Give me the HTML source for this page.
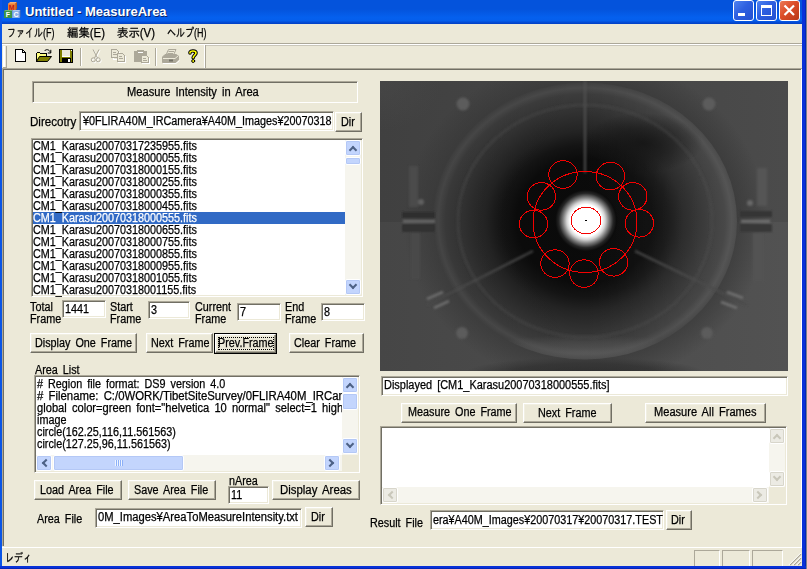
<!DOCTYPE html>
<html><head><meta charset="utf-8"><title>Untitled - MeasureArea</title>
<style>
html,body{margin:0;padding:0}
body{width:807px;height:569px;overflow:hidden;background:#ECE9D8;position:relative;font-family:"Liberation Sans","IPAGothic","Noto Sans CJK JP",sans-serif;font-size:12px;color:#000;line-height:12px}
.a{position:absolute}
.t{position:absolute;white-space:pre;transform:scaleX(.9);transform-origin:0 0;word-spacing:2.2px;line-height:12px;height:12px;-webkit-text-stroke:.25px}
.btn{position:absolute;box-sizing:border-box;background:#ECE9D8;border:1px solid;border-color:#fff #716F64 #716F64 #fff;box-shadow:inset -1px -1px 0 #ACA899,inset 1px 1px 0 #F1EFE2}
.edit{position:absolute;box-sizing:border-box;background:#fff;border:1px solid;border-color:#ACA899 #fff #fff #ACA899;box-shadow:inset 1px 1px 0 #716F64,inset -1px -1px 0 #ECE9D8;overflow:hidden}
.sunk{position:absolute;box-sizing:border-box;border:1px solid;border-color:#ACA899 #fff #fff #ACA899;box-shadow:inset 1px 1px 0 #716F64,inset -1px -1px 0 #ECE9D8}
.sbtn{position:absolute;box-sizing:border-box;background:#C3D5FD;border:1px solid #fff;border-radius:2px;box-shadow:inset 0 0 0 1px #B4C8F6}
.sbtn.dis{background:#ECEBE4;border-color:#fff;box-shadow:inset 0 0 0 1px #D8D6CB}
.sbtn::after{content:"";position:absolute;left:50%;top:50%;width:4px;height:4px;border:solid #4D6185;border-width:2px 0 0 2px;margin:-3px 0 0 -3px;display:none}
.up::after{display:block;transform:translateY(2px) rotate(45deg)}
.dn::after{display:block;transform:translateY(-2px) rotate(225deg)}
.lf::after{display:block;transform:translateX(2px) rotate(-45deg)}
.rt::after{display:block;transform:translateX(-2px) rotate(135deg)}
.sbtn.dis::after{border-color:#C9C7BA}
.track{position:absolute;background:#F6F5EE}
</style></head><body>
<!-- TITLEBAR -->
<div class="a" id="title" style="left:0;top:0;width:807px;height:24px;background:linear-gradient(#0453DC 0,#0453DC 38%,#0560EE 72%,#055EEC 86%,#0347D0 95%,#0240C4 100%)"></div>
<div class="a" style="left:25px;top:3px;font:bold 13px 'Liberation Sans',sans-serif;color:#fff;white-space:pre;line-height:18px;text-shadow:1px 1px 0 #0A246A" id="ttext">Untitled - MeasureArea</div>
<svg class="a" style="left:3px;top:1px" width="19" height="18" viewBox="3 1 19 18">
<path d="M8 4L10 2H17L15 4Z" fill="#F8B070"/><path d="M15 4L17 2V9L15 10.500Z" fill="#B85818"/><rect x="8" y="3.500" width="7.500" height="7" fill="#EC8038"/>
<path d="M4 11L5.500 10H12L12 11Z" fill="#80C080"/><rect x="4" y="10.800" width="8" height="7.200" fill="#3C9444"/>
<path d="M12 11L13.500 10H20.500L19.500 11Z" fill="#B8D0F0"/><path d="M19.500 11L20.500 10V17L19.500 18Z" fill="#5070B0"/><rect x="12.200" y="10.800" width="7.500" height="7.200" fill="#88B0E8"/>
<text x="11.700" y="9.800" font-family="Liberation Sans,sans-serif" font-weight="bold" font-size="7" fill="#C01810" text-anchor="middle">M</text>
<text x="8" y="17.200" font-family="Liberation Sans,sans-serif" font-weight="bold" font-size="7" fill="#fff" text-anchor="middle">F</text>
<text x="16" y="17.200" font-family="Liberation Sans,sans-serif" font-weight="bold" font-size="7" fill="#fff" text-anchor="middle">C</text>
</svg>
<div class="a" style="left:733px;top:0;width:21px;height:21px;box-sizing:border-box;border:1px solid #fff;border-radius:3px;background:linear-gradient(135deg,#4F83F0 0,#2E5FE0 45%,#2450D0 100%)"></div>
<div class="a" style="left:738px;top:13px;width:7px;height:3px;background:#fff"></div>
<div class="a" style="left:756px;top:0;width:21px;height:21px;box-sizing:border-box;border:1px solid #fff;border-radius:3px;background:linear-gradient(135deg,#4F83F0 0,#2E5FE0 45%,#2450D0 100%)"></div>
<div class="a" style="left:761px;top:5px;width:11px;height:11px;box-sizing:border-box;border:1px solid #fff;border-top-width:3px"></div>
<div class="a" style="left:779px;top:0;width:21px;height:21px;box-sizing:border-box;border:1px solid #fff;border-radius:3px;background:linear-gradient(135deg,#EC7A58 0,#DC4C28 45%,#B83818 100%)"></div>
<svg class="a" style="left:779px;top:0" width="21" height="21" viewBox="0 0 21 21"><path d="M5.500 5.500L15 15M15 5.500L5.500 15" stroke="#fff" stroke-width="2.200" fill="none"/></svg>
<!-- MENU -->
<div class="a" style="left:2px;top:24px;width:800px;height:19px;background:#ECE9D8"></div>
<div class="t" style="left:7px;top:27px;transform:scaleX(.75)">ファイル(F)</div>
<div class="t" style="left:67px;top:27px;transform:scaleX(.95)">編集(E)</div>
<div class="t" style="left:117px;top:27px;transform:scaleX(.95)">表示(V)</div>
<div class="t" style="left:167px;top:27px;transform:scaleX(.75)">ヘルプ(H)</div>
<div class="a" style="left:2px;top:43px;width:800px;height:1px;background:#ACA899"></div>
<div class="a" style="left:2px;top:44px;width:800px;height:1px;background:#fff"></div>

<!-- TOOLBAR -->
<div class="a" style="left:3px;top:46px;width:2px;height:21px;background:#fff"></div>
<div class="a" style="left:6px;top:46px;width:1px;height:22px;background:#ACA899"></div>
<div class="a" style="left:3px;top:67px;width:4px;height:1px;background:#ACA899"></div>
<div class="a" style="left:206px;top:45px;width:596px;height:1px;background:#C9C6B9"></div>
<div class="a" style="left:204px;top:45px;width:1px;height:23px;background:#fff"></div>
<div class="a" style="left:205px;top:45px;width:1px;height:23px;background:#ACA899"></div>
<div class="a" style="left:80px;top:48px;width:1px;height:18px;background:#ACA899"></div>
<div class="a" style="left:81px;top:48px;width:1px;height:18px;background:#fff"></div>
<div class="a" style="left:155px;top:48px;width:1px;height:18px;background:#ACA899"></div>
<div class="a" style="left:156px;top:48px;width:1px;height:18px;background:#fff"></div>
<svg class="a" style="left:0;top:45px" width="220" height="23" viewBox="0 0 220 23"><g id="tbicons" transform="translate(0,-45)" shape-rendering="crispEdges">
<!-- new -->
<path d="M15.5 49.5H22.5L25.5 52.5V61.5H15.5Z" fill="#fff" stroke="#000"/><path d="M22.5 49.5V52.5H25.5" fill="none" stroke="#000"/>
<!-- open -->
<path d="M36.5 61.5V53.5L37.5 52.5H39.5L40.5 53.5H46.5V56.5" fill="#FFFF80" stroke="#000"/>
<path d="M36.5 61.5L39.5 56.5H51.5L47.5 61.5Z" fill="#808000" stroke="#000" shape-rendering="auto"/>
<path d="M44.5 51C46 49 49 49 50.5 52.5M50.8 49.8V53H47.8" fill="none" stroke="#000" shape-rendering="auto"/>
<!-- save -->
<rect x="59.5" y="49.5" width="13" height="13" fill="#808000" stroke="#000"/>
<rect x="62" y="50" width="8" height="6" fill="#ECE9D8"/><rect x="62" y="56" width="8" height="1" fill="#fff"/>
<rect x="62" y="58" width="9" height="4" fill="#000"/><rect x="68" y="59" width="2" height="3" fill="#fff"/><rect x="71" y="50" width="1" height="1" fill="#fff"/>
<!-- cut (disabled) -->
<g fill="none" shape-rendering="auto">
<g stroke="#fff" transform="translate(1,1)"><path d="M93 49.5L97.5 58M99 49.5L94.5 58"/><circle cx="93.3" cy="59.8" r="2"/><circle cx="98.2" cy="59.8" r="2"/></g>
<g stroke="#ACA899"><path d="M93 49.5L97.5 58M99 49.5L94.5 58"/><circle cx="93.3" cy="59.8" r="2"/><circle cx="98.2" cy="59.8" r="2"/></g>
</g>
<!-- copy (disabled) -->
<g fill="#ECE9D8">
<path d="M112.500 50.5H117.500L119.500 52.500V58.500H112.500Z" stroke="#fff" transform="translate(1,1)"/>
<path d="M111.500 49.500H116.500L118.500 51.500V57.500H111.500Z" stroke="#ACA899"/>
<path d="M113 52.500H116M113 54.500H117" stroke="#ACA899"/>
<path d="M117.500 53.500H122.500L124.500 55.500V61.500H117.500Z" stroke="#fff" transform="translate(1,1)"/>
<path d="M117.500 53.500H122.500L124.500 55.500V61.500H117.500Z" stroke="#ACA899"/>
<path d="M119 56.500H122M119 58.500H123M119 60" stroke="#ACA899"/>
</g>
<!-- paste (disabled) -->
<rect x="134" y="51" width="13" height="11" fill="#ACA899"/><rect x="137" y="49.500" width="7" height="3" fill="#ACA899"/><rect x="138" y="52" width="5" height="1" fill="#fff"/>
<path d="M141.500 55.500H146.500L148.500 57.500V62.500H141.500Z" fill="#ECE9D8" stroke="#fff" transform="translate(1,1)"/>
<path d="M141.500 55.500H146.500L148.500 57.500V62.500H141.500Z" fill="#ECE9D8" stroke="#ACA899"/><path d="M143 58.500H146M143 60.500H147" stroke="#ACA899"/>
<!-- print (disabled) -->
<g shape-rendering="auto">
<path d="M166 55L168.500 49.500H176L173.500 55Z" fill="#ECE9D8" stroke="#ACA899"/>
<path d="M168.500 51.500H174M167.500 53.500H173" stroke="#ACA899" fill="none"/>
<path d="M162.500 57L165 54.500H176L178.500 56V60L175.500 62.500H162.500Z" fill="#ACA899" stroke="#ACA899"/>
<path d="M163 58.500H175M175 58.500L178 56" stroke="#ECE9D8" fill="none"/>
<rect x="169" y="59.500" width="4" height="2" fill="#716F64"/>
<path d="M163 63.500H176L179.500 60.500" stroke="#fff" fill="none"/>
</g>
<!-- help -->
<g shape-rendering="auto" fill="none" stroke-linecap="round" stroke-linejoin="round">
<path d="M190 53V52.500C190 50.500 196 50.500 196 53C196 55 193.200 55.500 193.200 57.800" stroke="#000" stroke-width="3.600"/>
<path d="M190 53V52.500C190 50.500 196 50.500 196 53C196 55 193.200 55.500 193.200 57.800" stroke="#FFFF00" stroke-width="1.600"/>
<circle cx="193.200" cy="61" r="1.500" fill="#FFFF00" stroke="#000" stroke-width="1"/>
</g>
</g></svg>

<!-- VIEW -->
<div class="a" style="left:2px;top:68px;width:800px;height:1px;background:#ACA899"></div>
<div class="a" style="left:2px;top:69px;width:800px;height:1px;background:#716F64"></div>
<div class="a" style="left:2px;top:68px;width:1px;height:478px;background:#ACA899"></div>
<div class="a" style="left:3px;top:69px;width:1px;height:477px;background:#716F64"></div>
<div class="a" style="left:801px;top:69px;width:1px;height:478px;background:#fff"></div>

<!-- LEFT -->
<div class="sunk" style="left:32px;top:81px;width:326px;height:22px"></div>
<div class="t" style="left:127px;top:86px;transform:scaleX(.928)">Measure Intensity in Area</div>
<div class="t" style="left:30px;top:116px;transform:scaleX(.965)">Direcotry</div>
<div class="edit" style="left:79px;top:111px;width:255px;height:20px"></div>
<div class="t" style="left:83px;top:115px">¥0FLIRA40M_IRCamera¥A40M_Images¥20070318</div>
<div class="btn" style="left:335px;top:112px;width:27px;height:20px"></div>
<div class="t" style="left:341px;top:116px">Dir</div>
<div class="edit" style="left:31px;top:138px;width:332px;height:159px"></div>
<div class="a" style="left:33px;top:212px;width:312px;height:12px;background:#316AC5"></div>
<div class="t" style="left:33px;top:140px">CM1_Karasu20070317235955.fits</div>
<div class="t" style="left:33px;top:152px">CM1_Karasu20070318000055.fits</div>
<div class="t" style="left:33px;top:164px">CM1_Karasu20070318000155.fits</div>
<div class="t" style="left:33px;top:176px">CM1_Karasu20070318000255.fits</div>
<div class="t" style="left:33px;top:188px">CM1_Karasu20070318000355.fits</div>
<div class="t" style="left:33px;top:200px">CM1_Karasu20070318000455.fits</div>
<div class="t" style="left:33px;top:212px;color:#fff">CM1_Karasu20070318000555.fits</div>
<div class="t" style="left:33px;top:224px">CM1_Karasu20070318000655.fits</div>
<div class="t" style="left:33px;top:236px">CM1_Karasu20070318000755.fits</div>
<div class="t" style="left:33px;top:248px">CM1_Karasu20070318000855.fits</div>
<div class="t" style="left:33px;top:260px">CM1_Karasu20070318000955.fits</div>
<div class="t" style="left:33px;top:272px">CM1_Karasu20070318001055.fits</div>
<div class="t" style="left:33px;top:284px">CM1_Karasu20070318001155.fits</div>
<div class="track" style="left:345px;top:140px;width:16px;height:155px"></div>
<div class="sbtn up" style="left:345px;top:140px;width:16px;height:16px"></div>
<div class="sbtn" style="left:345px;top:157px;width:16px;height:8px"></div>
<div class="sbtn dn" style="left:345px;top:279px;width:16px;height:16px"></div>
<div class="t" style="left:30px;top:301px">Total</div>
<div class="t" style="left:30px;top:313px">Frame</div>
<div class="edit" style="left:62px;top:300px;width:44px;height:18px"></div>
<div class="t" style="left:65px;top:303px">1441</div>
<div class="t" style="left:110px;top:301px">Start</div>
<div class="t" style="left:110px;top:313px">Frame</div>
<div class="edit" style="left:148px;top:301px;width:42px;height:18px"></div>
<div class="t" style="left:151px;top:304px">3</div>
<div class="t" style="left:195px;top:301px">Current</div>
<div class="t" style="left:195px;top:313px">Frame</div>
<div class="edit" style="left:237px;top:303px;width:44px;height:18px"></div>
<div class="t" style="left:240px;top:306px">7</div>
<div class="t" style="left:285px;top:301px">End</div>
<div class="t" style="left:285px;top:313px">Frame</div>
<div class="edit" style="left:321px;top:303px;width:44px;height:18px"></div>
<div class="t" style="left:324px;top:306px">8</div>
<div class="btn" style="left:30px;top:333px;width:107px;height:20px"></div>
<div class="t" style="left:35px;top:337px">Display One Frame</div>
<div class="btn" style="left:146px;top:333px;width:67px;height:20px"></div>
<div class="t" style="left:151px;top:337px">Next Frame</div>
<div class="a" style="left:214px;top:333px;width:63px;height:21px;background:#000"></div><div class="btn" style="left:215px;top:334px;width:61px;height:19px"></div>
<div class="t" style="left:218px;top:337px">Prev.Frame</div>
<div class="a" style="left:218px;top:337px;width:56px;height:13px;border:1px dotted #000;box-sizing:border-box"></div>
<div class="btn" style="left:289px;top:333px;width:75px;height:20px"></div>
<div class="t" style="left:294px;top:337px">Clear Frame</div>
<div class="t" style="left:35px;top:364px">Area List</div>
<div class="edit" style="left:34px;top:375px;width:326px;height:98px"></div>
<div class="a" style="left:36px;top:378px;width:306px;height:77px;overflow:hidden">
<div class="t" style="left:1px;top:0px"># Region file format: DS9 version 4.0</div>
<div class="t" style="left:1px;top:12px;transform:scaleX(.946)"># Filename: C:/0WORK/TibetSiteSurvey/0FLIRA40M_IRCamera</div>
<div class="t" style="left:1px;top:24px;transform:scaleX(.929)">global color=green font="helvetica 10 normal" select=1 highlite=1</div>
<div class="t" style="left:1px;top:36px">image</div>
<div class="t" style="left:1px;top:48px">circle(162.25,116,11.561563)</div>
<div class="t" style="left:1px;top:60px">circle(127.25,96,11.561563)</div>
</div>
<div class="track" style="left:342px;top:377px;width:16px;height:78px"></div><div class="a" style="left:342px;top:455px;width:16px;height:16px;background:#ECE9D8"></div>
<div class="sbtn up" style="left:342px;top:377px;width:16px;height:16px"></div>
<div class="sbtn" style="left:342px;top:393px;width:16px;height:17px"></div>
<div class="sbtn dn" style="left:342px;top:438px;width:16px;height:16px"></div>
<div class="track" style="left:36px;top:455px;width:306px;height:16px"></div>
<div class="sbtn lf" style="left:36px;top:455px;width:16px;height:16px"></div>
<div class="sbtn" style="left:53px;top:455px;width:131px;height:16px"></div>
<div class="a" style="left:115px;top:460px;width:8px;height:6px;background:repeating-linear-gradient(90deg,#EEF4FE 0,#EEF4FE 1px,#8CB0F8 1px,#8CB0F8 2px)"></div>
<div class="sbtn rt" style="left:324px;top:455px;width:16px;height:16px"></div>
<div class="btn" style="left:34px;top:480px;width:88px;height:20px"></div>
<div class="t" style="left:40px;top:484px">Load Area File</div>
<div class="btn" style="left:128px;top:480px;width:88px;height:20px"></div>
<div class="t" style="left:134px;top:484px">Save Area File</div>
<div class="t" style="left:229px;top:475px">nArea</div>
<div class="edit" style="left:228px;top:486px;width:41px;height:18px"></div>
<div class="t" style="left:231px;top:489px">11</div>
<div class="btn" style="left:272px;top:480px;width:88px;height:20px"></div>
<div class="t" style="left:280px;top:484px;transform:scaleX(.95)">Display Areas</div>
<div class="t" style="left:37px;top:513px">Area File</div>
<div class="edit" style="left:95px;top:508px;width:207px;height:20px"></div>
<div class="t" style="left:98px;top:511px;transform:scaleX(.935)">0M_Images¥AreaToMeasureIntensity.txt</div>
<div class="btn" style="left:305px;top:507px;width:28px;height:20px"></div>
<div class="t" style="left:311px;top:511px">Dir</div>

<!-- RIGHT -->
<svg class="a" id="img" style="left:380px;top:81px" width="408" height="290" viewBox="-1 0 408 290">
<defs>
<linearGradient id="g0" x1="0" y1="0" x2="1" y2="0"><stop offset="0" stop-color="#464646"/><stop offset="1" stop-color="#525252"/></linearGradient>
<radialGradient id="g7" cx="204" cy="140" r="182" gradientUnits="userSpaceOnUse" gradientTransform="translate(0 140) scale(1 .908) translate(0 -140)"><stop offset="0" stop-color="#363636" stop-opacity=".6"/><stop offset=".84" stop-color="#363636" stop-opacity=".6"/><stop offset="1" stop-color="#343434" stop-opacity="0"/></radialGradient>
<linearGradient id="g8" x1="0" y1="0" x2="1" y2="0"><stop offset="0" stop-color="#000" stop-opacity=".06"/><stop offset=".5" stop-color="#000" stop-opacity="0"/><stop offset=".5" stop-color="#fff" stop-opacity="0"/><stop offset="1" stop-color="#fff" stop-opacity=".07"/></linearGradient>
<radialGradient id="g1" cx="204" cy="140" r="152" gradientUnits="userSpaceOnUse" gradientTransform="translate(0 140) scale(1 .908) translate(0 -140)">
<stop offset="0" stop-color="#0a0a0a"/><stop offset=".45" stop-color="#0b0b0b"/><stop offset=".55" stop-color="#141414"/><stop offset=".65" stop-color="#232323"/><stop offset=".75" stop-color="#2d2d2d"/><stop offset=".83" stop-color="#353535"/><stop offset=".92" stop-color="#3c3c3c"/><stop offset=".965" stop-color="#494949"/><stop offset="1" stop-color="#404040"/></radialGradient>
<radialGradient id="g5" cx="205" cy="139.500" r="32" gradientUnits="userSpaceOnUse">
<stop offset="0" stop-color="#fff"/><stop offset=".5" stop-color="#fff"/><stop offset=".6" stop-color="#d4d4d4"/><stop offset=".72" stop-color="#7c7c7c"/><stop offset=".85" stop-color="#262626"/><stop offset=".95" stop-color="#0c0c0c"/><stop offset="1" stop-color="#0a0a0a" stop-opacity="0"/></radialGradient>
<linearGradient id="g2" x1="0" y1="0" x2="0" y2="1"><stop offset="0" stop-color="#fff" stop-opacity="0"/><stop offset=".55" stop-color="#fff" stop-opacity="0"/><stop offset="1" stop-color="#fff" stop-opacity=".06"/></linearGradient>
<radialGradient id="g6"><stop offset="0" stop-color="#505050" stop-opacity=".35"/><stop offset="1" stop-color="#505050" stop-opacity="0"/></radialGradient>
<radialGradient id="g9"><stop offset="0" stop-color="#262626" stop-opacity=".85"/><stop offset=".6" stop-color="#282828" stop-opacity=".6"/><stop offset="1" stop-color="#2c2c2c" stop-opacity="0"/></radialGradient>
<radialGradient id="g3"><stop offset="0" stop-color="#101010" stop-opacity=".75"/><stop offset=".5" stop-color="#101010" stop-opacity=".45"/><stop offset="1" stop-color="#101010" stop-opacity="0"/></radialGradient>
<radialGradient id="g4"><stop offset="0" stop-color="#686868" stop-opacity=".5"/><stop offset=".6" stop-color="#606060" stop-opacity=".3"/><stop offset="1" stop-color="#606060" stop-opacity="0"/></radialGradient>
<filter id="b1" x="-20%" y="-20%" width="140%" height="140%"><feGaussianBlur stdDeviation="1.2"/></filter>
<filter id="b3" x="-30%" y="-30%" width="160%" height="160%"><feGaussianBlur stdDeviation="8"/></filter>
<clipPath id="rc"><ellipse cx="204" cy="140" rx="152" ry="138.500"/></clipPath><clipPath id="ic"><rect x="-1" width="408" height="290"/></clipPath>
</defs>
<g clip-path="url(#ic)">
<rect x="-1" width="408" height="290" fill="url(#g0)"/><rect x="-1" width="408" height="141" fill="#000" opacity=".08"/><ellipse cx="204" cy="292" rx="120" ry="16" fill="url(#g9)"/>
<ellipse cx="204" cy="140" rx="182" ry="165" fill="url(#g7)"/><ellipse cx="204" cy="140" rx="152" ry="138.500" fill="url(#g1)"/><ellipse cx="204" cy="140" rx="152" ry="138.500" fill="url(#g8)"/><circle cx="205" cy="139.500" r="32" fill="url(#g5)"/><ellipse cx="0" cy="0" rx="60" ry="50" fill="url(#g6)"/>
<ellipse cx="262" cy="62" rx="60" ry="30" fill="url(#g3)"/><ellipse cx="204" cy="271" rx="125" ry="17" fill="url(#g4)" clip-path="url(#rc)"/>

<g filter="url(#b1)">
<ellipse cx="204" cy="140" rx="127" ry="116" fill="none" stroke="#505050" stroke-width="3" opacity=".35"/>
<line x1="204" y1="0" x2="204" y2="92" stroke="#505050" stroke-width="2.5" opacity=".8"/>
<line x1="152" y1="170" x2="46" y2="224" stroke="#4c4c4c" stroke-width="2.5" opacity=".8"/>
<line x1="254" y1="170" x2="366" y2="224" stroke="#4c4c4c" stroke-width="2.5" opacity=".8"/>
<circle cx="82" cy="23" r="6.5" fill="#5c5c5c"/><circle cx="328" cy="23" r="6.5" fill="#5c5c5c"/>
<circle cx="81" cy="252" r="6" fill="#5c5c5c"/><circle cx="326" cy="252" r="6" fill="#5c5c5c"/>
<rect x="28" y="85" width="9" height="41" fill="#4b4b4b"/><circle cx="40" cy="121" r="3" fill="#606060"/>
<rect x="21" y="131" width="33" height="6" fill="#2e2e2e"/><rect x="22" y="139" width="32" height="2.500" fill="#6c6c6c"/><rect x="21" y="143" width="33" height="8" fill="#323232"/>
<rect x="30" y="152" width="9" height="46" fill="#494949"/>
<rect x="376" y="87" width="10" height="38" fill="#555"/><circle cx="369" cy="122" r="3" fill="#686868"/>
<rect x="359" y="130" width="32" height="6" fill="#343434"/><rect x="360" y="139" width="29" height="2.500" fill="#747474"/><rect x="359" y="143" width="32" height="8" fill="#383838"/>
<rect x="372" y="152" width="11" height="48" fill="#535353"/>
<line x1="46" y1="218" x2="62" y2="211" stroke="#6c6c6c" stroke-width="2.500"/><line x1="53" y1="227" x2="68" y2="220" stroke="#6c6c6c" stroke-width="2.500"/>
<line x1="346" y1="211" x2="362" y2="217" stroke="#707070" stroke-width="2.500"/><line x1="340" y1="221" x2="356" y2="227" stroke="#707070" stroke-width="2.500"/>
</g>
</g>
<g fill="none" stroke="#f40000" stroke-width="1" shape-rendering="crispEdges">
<ellipse cx="205" cy="139.500" rx="14.800" ry="13.300"/>
<ellipse cx="204" cy="141" rx="52" ry="50.5"/>
<ellipse cx="182.0" cy="93.5" rx="14.2" ry="13.8"/><ellipse cx="229.4" cy="95.1" rx="14.2" ry="13.8"/><ellipse cx="160.4" cy="115.4" rx="14.2" ry="13.8"/><ellipse cx="251.8" cy="115.4" rx="14.2" ry="13.8"/><ellipse cx="152.5" cy="143.0" rx="14.2" ry="13.8"/><ellipse cx="258.4" cy="142.3" rx="14.2" ry="13.8"/><ellipse cx="174.0" cy="182.6" rx="14.2" ry="13.8"/><ellipse cx="232.6" cy="181.3" rx="14.2" ry="13.8"/><ellipse cx="203.0" cy="192.6" rx="14.2" ry="13.8"/>
</g>
<rect x="204" y="139" width="2" height="1" fill="#000"/>
</svg>
<div class="edit" style="left:381px;top:376px;width:407px;height:20px"></div>
<div class="t" style="left:384px;top:379px;transform:scaleX(.913)">Displayed [CM1_Karasu20070318000555.fits]</div>
<div class="btn" style="left:401px;top:403px;width:116px;height:20px"></div>
<div class="t" style="left:408px;top:406px">Measure One Frame</div>
<div class="btn" style="left:523px;top:403px;width:89px;height:20px"></div>
<div class="t" style="left:538px;top:407px">Next Frame</div>
<div class="btn" style="left:645px;top:403px;width:121px;height:20px"></div>
<div class="t" style="left:654px;top:406px;transform:scaleX(.923)">Measure All Frames</div>
<div class="edit" style="left:380px;top:426px;width:407px;height:79px"></div>
<div class="track" style="left:769px;top:428px;width:16px;height:59px"></div>
<div class="sbtn dis up" style="left:769px;top:428px;width:16px;height:16px"></div>
<div class="sbtn dis dn" style="left:769px;top:471px;width:16px;height:16px"></div>
<div class="track" style="left:382px;top:487px;width:387px;height:16px"></div>
<div class="a" style="left:769px;top:487px;width:16px;height:16px;background:#ECE9D8"></div>
<div class="sbtn dis lf" style="left:382px;top:487px;width:16px;height:16px"></div>
<div class="sbtn dis rt" style="left:752px;top:487px;width:16px;height:16px"></div>
<div class="t" style="left:370px;top:517px">Result File</div>
<div class="edit" style="left:430px;top:510px;width:234px;height:20px"></div>
<div class="t" style="left:433px;top:514px">era¥A40M_Images¥20070317¥20070317.TEST</div>
<div class="btn" style="left:666px;top:510px;width:26px;height:20px"></div>
<div class="t" style="left:671px;top:514px">Dir</div>

<!-- STATUS -->
<div class="a" style="left:2px;top:547px;width:800px;height:1px;background:#fff"></div>
<div class="t" style="left:5px;top:552px;transform:scaleX(.75)">レディ</div>
<div class="sunk" style="left:694px;top:550px;width:26px;height:17px;box-shadow:none"></div>
<div class="sunk" style="left:722px;top:550px;width:28px;height:17px;box-shadow:none"></div>
<div class="sunk" style="left:752px;top:550px;width:31px;height:17px;box-shadow:none"></div>

<svg class="a" style="left:788px;top:552px" width="14" height="14" viewBox="0 0 14 14" shape-rendering="crispEdges">
<g stroke="#ACA899" stroke-width="1.400" shape-rendering="auto"><path d="M13 2L2 13M13 6L6 13M13 10L10 13"/></g>
<g stroke="#fff" stroke-width="1" shape-rendering="auto"><path d="M13 0.800L0.800 13M13 4.800L4.800 13M13 8.800L8.800 13"/></g>
</svg>
<!-- BORDERS -->
<div class="a" style="left:0;top:0;width:2px;height:569px;background:#0A55E6"></div>
<div class="a" style="left:802px;top:0;width:4px;height:569px;background:linear-gradient(90deg,#0831D9 0,#0831D9 70%,#001EA0 100%)"></div>
<div class="a" style="left:806px;top:0;width:1px;height:569px;background:#7A8290"></div>
<div class="a" style="left:0;top:566px;width:806px;height:3px;background:linear-gradient(#0831D9 0,#0831D9 60%,#001EA0 100%)"></div>
</body></html>
